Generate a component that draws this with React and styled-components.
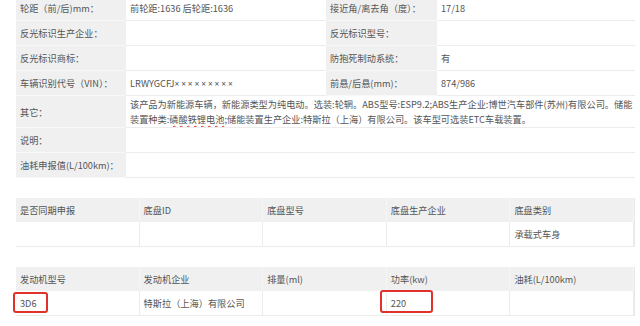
import React from "react";
import styled, { createGlobalStyle } from "styled-components";

const Global = createGlobalStyle`
  html, body { margin: 0; padding: 0; background: #fff; }
  body {
    width: 640px; height: 326px; overflow: hidden;
    font-family: "Noto Sans CJK SC", "Noto Sans", sans-serif;
    font-size: 9.2px; color: #555;
  }
`;

const Page = styled.div`
  display: flex;
  flex-direction: column;
  gap: 20px;
  padding: 0 5px 0 16px;
  margin-top: -4px;
`;

const SpecGrid = styled.div`
  display: grid;
  grid-template-columns: 110px 200px 111px 198px;
  border-right: 1px solid #e8e8e8;
`;

const Label = styled.div`
  display: flex;
  align-items: center;
  height: ${(p) => p.$h || 24}px;
  padding-left: 4px;
  background: #f0f0f0;
  border-bottom: 1px solid #f8f8f8;
  white-space: nowrap;
`;

const Value = styled.div`
  display: flex;
  align-items: center;
  height: ${(p) => p.$h || 24}px;
  padding: 0 4px;
  background: #fff;
  border-bottom: 1px solid #ececec;
  grid-column: span ${(p) => p.$span || 1};
  white-space: nowrap;
  line-height: 15px;
  overflow: hidden;
`;

const Masked = styled.span`
  font-family: "Noto Sans", sans-serif;
  font-size: 8.4px;
  letter-spacing: 1.9px;
`;

const Wavy = styled.span`
  text-decoration-line: underline;
  text-decoration-style: wavy;
  text-decoration-color: #e0302a;
  text-decoration-thickness: 1.2px;
  text-underline-offset: 2px;
`;

const DataGrid = styled.div`
  display: grid;
  grid-template-columns: repeat(5, 1fr);
  border-right: 1px solid #e8e8e8;
`;

const Head = styled.div`
  display: flex;
  align-items: center;
  height: 24px;
  padding-left: 4px;
  background: #f0f0f0;
  border-right: 1px solid #f6f6f6;
  white-space: nowrap;
`;

const Cell = styled.div`
  position: relative;
  display: flex;
  align-items: center;
  height: 24px;
  padding-left: 4px;
  background: #fff;
  border-right: 1px solid #ececec;
  border-bottom: 1px solid #ececec;
  white-space: nowrap;
`;

const Mark = styled.span`
  position: absolute;
  left: ${(p) => p.$l}px;
  top: ${(p) => p.$t}px;
  width: ${(p) => p.$w}px;
  height: ${(p) => p.$hh}px;
  border: 2px solid #e0322b;
  border-radius: 3px;
  box-sizing: border-box;
  pointer-events: none;
`;

const specRows = [
  ["轮距（前/后)mm：", "前轮距:1636 后轮距:1636", "接近角/离去角（度）：", "17/18"],
  ["反光标识生产企业：", "", "反光标识型号：", ""],
  ["反光标识商标：", "", "防抱死制动系统：", "有"],
  [
    "车辆识别代号（VIN）：",
    <>
      LRWYGCFJ<Masked>×××××××××</Masked>
    </>,
    "前悬/后悬(mm)：",
    "874/986",
  ],
];

export default function App() {
  return (
    <>
      <Global />
      <Page>
        <SpecGrid>
          {specRows.map((r, i) => (
            <React.Fragment key={i}>
              <Label>{r[0]}</Label>
              <Value>{r[1]}</Value>
              <Label>{r[2]}</Label>
              <Value>{r[3]}</Value>
            </React.Fragment>
          ))}
          <Label $h={31}>其它：</Label>
          <Value $h={31} $span={3}>
            <span>
              该产品为新能源车辆，新能源类型为纯电动。选装:轮辋。ABS型号:ESP9.2;ABS生产企业:博世汽车部件(苏州)有限公司。储能
              <br />
              装置种类:<Wavy>磷酸铁锂电池</Wavy>;储能装置生产企业:特斯拉（上海）有限公司。该车型可选装ETC车载装置。
            </span>
          </Value>
          <Label>说明：</Label>
          <Value $span={3}></Value>
          <Label>油耗申报值(L/100km)：</Label>
          <Value $span={3}></Value>
        </SpecGrid>

        <DataGrid>
          <Head>是否同期申报</Head>
          <Head>底盘ID</Head>
          <Head>底盘型号</Head>
          <Head>底盘生产企业</Head>
          <Head>底盘类别</Head>
          <Cell></Cell>
          <Cell></Cell>
          <Cell></Cell>
          <Cell></Cell>
          <Cell>承载式车身</Cell>
        </DataGrid>

        <DataGrid>
          <Head>发动机型号</Head>
          <Head>发动机企业</Head>
          <Head>排量(ml)</Head>
          <Head>功率(kw)</Head>
          <Head>油耗(L/100km)</Head>
          <Cell>
            3D6
            <Mark $l={-3} $t={1} $w={35} $hh={21} />
          </Cell>
          <Cell>特斯拉（上海）有限公司</Cell>
          <Cell></Cell>
          <Cell>
            220
            <Mark $l={-7} $t={-1} $w={53} $hh={23} />
          </Cell>
          <Cell></Cell>
        </DataGrid>
      </Page>
    </>
  );
}
